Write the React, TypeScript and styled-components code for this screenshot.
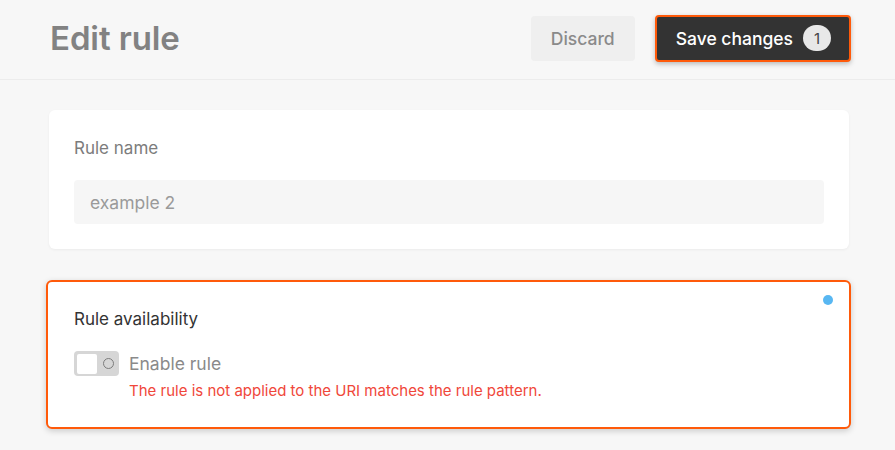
import styled, { createGlobalStyle } from "styled-components";

const GlobalStyle = createGlobalStyle`
  body {
    margin: 0;
    background: #f7f7f7;
    font-family: Inter, "Noto Sans", sans-serif;
  }
`;

const Page = styled.div`
  min-height: 450px;
  background: #f7f7f7;
`;

const Header = styled.header`
  height: 80px;
  box-sizing: border-box;
  padding: 0 44px 3px 50px;
  display: flex;
  align-items: center;
  justify-content: space-between;
  border-bottom: 1px solid #ececec;
`;

const Title = styled.h1`
  margin: 0;
  font-size: 33px;
  font-weight: 600;
  color: #828282;
  letter-spacing: -0.1px;
`;

const Actions = styled.div`
  display: flex;
  align-items: center;
  gap: 20px;
`;

const DiscardButton = styled.button`
  width: 104px;
  height: 45px;
  border: none;
  border-radius: 4px;
  background: #efefef;
  color: #8a8a8a;
  font-family: inherit;
  font-size: 17.5px;
  font-weight: 500;
`;

const SaveButton = styled.button`
  height: 47px;
  box-sizing: border-box;
  padding: 0 18px 0 19px;
  display: flex;
  align-items: center;
  gap: 10px;
  border: 2px solid #ff5a0a;
  border-radius: 4px;
  background: #333333;
  color: #ffffff;
  font-family: inherit;
  font-size: 17.5px;
  font-weight: 500;
  box-shadow: 0 2px 5px rgba(0, 0, 0, 0.25);
`;

const Badge = styled.span`
  width: 28px;
  height: 26px;
  border-radius: 13px;
  background: #e8e8e8;
  color: #444;
  font-size: 15px;
  font-weight: 400;
  display: flex;
  align-items: center;
  justify-content: center;
`;

const Content = styled.main`
  width: 800px;
  margin: 0 0 0 49px;
  padding-top: 30px;
  display: flex;
  flex-direction: column;
  gap: 31px;
`;

const Card = styled.section<{ $active?: boolean }>`
  position: relative;
  background: #ffffff;
  border-radius: 6px;
  box-sizing: border-box;
  padding: ${(p) => (p.$active ? "25px 23px 25px 26px" : "26px 25px 25px 25px")};
  margin: ${(p) => (p.$active ? "0 -2px 0 -3px" : "0")};
  border: ${(p) => (p.$active ? "2px solid #ff5a0a" : "none")};
  box-shadow: ${(p) =>
    p.$active
      ? "0 2px 6px rgba(0, 0, 0, 0.18)"
      : "0 1px 3px rgba(0, 0, 0, 0.05)"};
`;

const Label = styled.div<{ $dark?: boolean }>`
  font-size: 17px;
  line-height: 24px;
  color: ${(p) => (p.$dark ? "#333333" : "#7c7c7c")};
  font-weight: 400;
`;

const Input = styled.input`
  margin-top: 20px;
  width: 100%;
  height: 44px;
  box-sizing: border-box;
  border: none;
  border-radius: 4px;
  background: #f6f6f6;
  padding: 0 16px;
  font-family: inherit;
  font-size: 17.5px;
  color: #333;
  outline: none;
  &::placeholder {
    color: #9a9a9a;
  }
`;

const Dot = styled.span`
  position: absolute;
  top: 13px;
  right: 16px;
  width: 10px;
  height: 10px;
  border-radius: 50%;
  background: #58b7f2;
`;

const ToggleRow = styled.div`
  margin-top: 20px;
  display: flex;
  align-items: center;
  gap: 10px;
`;

const Toggle = styled.span`
  width: 45px;
  height: 25px;
  flex-shrink: 0;
  border-radius: 4px;
  background: #d6d6d6;
  display: flex;
  align-items: center;
  padding: 0 3px;
  box-sizing: border-box;
`;

const Knob = styled.span`
  width: 20px;
  height: 20px;
  border-radius: 2px;
  background: #ffffff;
`;

const OffMark = styled.span`
  margin-left: auto;
  margin-right: 2px;
  width: 11px;
  height: 11px;
  box-sizing: border-box;
  border-radius: 50%;
  border: 1.5px solid #7c7c7c;
`;

const ToggleText = styled.span`
  font-size: 17.5px;
  color: #8a8a8a;
`;

const ErrorText = styled.div`
  margin: 4px 0 0 55px;
  font-size: 15px;
  line-height: 22px;
  color: #f0473a;
`;

export default function App() {
  return (
    <Page>
      <GlobalStyle />
      <Header>
        <Title>Edit rule</Title>
        <Actions>
          <DiscardButton>Discard</DiscardButton>
          <SaveButton>
            Save changes <Badge>1</Badge>
          </SaveButton>
        </Actions>
      </Header>
      <Content>
        <Card>
          <Label>Rule name</Label>
          <Input placeholder="example 2" />
        </Card>
        <Card $active>
          <Dot />
          <Label $dark>Rule availability</Label>
          <ToggleRow>
            <Toggle>
              <Knob />
              <OffMark />
            </Toggle>
            <ToggleText>Enable rule</ToggleText>
          </ToggleRow>
          <ErrorText>
            The rule is not applied to the URI matches the rule pattern.
          </ErrorText>
        </Card>
      </Content>
    </Page>
  );
}
